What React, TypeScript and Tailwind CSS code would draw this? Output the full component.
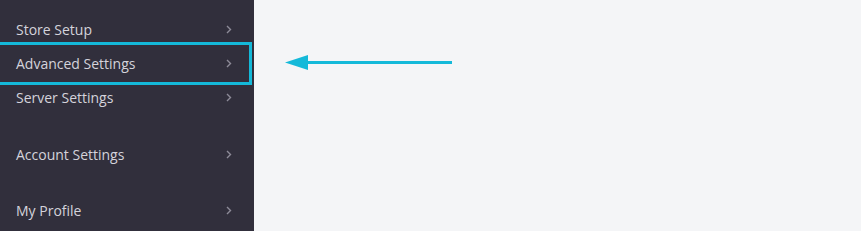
import React from 'react';

const Chevron = () => (
  <svg width="6" height="9" viewBox="0 0 6 9" className="flex-shrink-0">
    <polyline points="1,1 4.5,4.5 1,8" fill="none" stroke="#8d8b98" strokeWidth="1.4" />
  </svg>
);

const NavItem: React.FC<{ label: string; className?: string }> = ({ label, className = '' }) => (
  <div className={`flex items-center justify-between h-[34px] pl-4 pr-[22px] ${className}`}>
    <span className="text-[14px] text-[#d4d3db]">{label}</span>
    <Chevron />
  </div>
);

export default function App() {
  return (
    <div
      className="relative flex h-[231px] w-[861px] overflow-hidden bg-[#f4f5f7]"
      style={{ fontFamily: '"Open Sans", "Noto Sans", sans-serif' }}
    >
      <aside className="w-[254px] flex-shrink-0 bg-[#312f3c] pt-[12px]">
        <NavItem label="Store Setup" />
        <NavItem label="Advanced Settings" />
        <NavItem label="Server Settings" />
        <NavItem label="Account Settings" className="mt-[23px]" />
        <NavItem label="My Profile" className="mt-[22px]" />
      </aside>
      <main className="flex-1" />

      {/* highlight annotation */}
      <div className="absolute left-[-4px] top-[42px] w-[256px] h-[43px] border-[3px] border-[#14b9d9]" />
      <svg className="absolute left-[284px] top-[54px]" width="170" height="17" viewBox="0 0 170 17">
        <polygon points="1,8.5 24,1 24,16" fill="#14b9d9" />
        <rect x="22" y="7" width="146" height="3" fill="#14b9d9" />
      </svg>
    </div>
  );
}
